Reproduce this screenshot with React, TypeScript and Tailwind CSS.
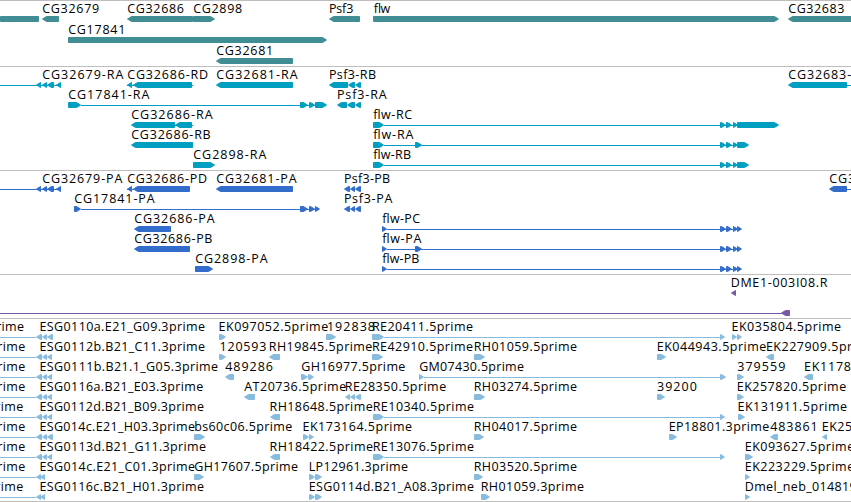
import React from "react";

type Strand = "L" | "R" | "N";
// [start, end, strand]
type Exon = [number, number, Strand];
// [start, end]
type Intron = [number, number];
// [text, start, end]
type Label = [string, number, number];

interface RowData {
  labels: Label[];
  exons: Exon[];
  introns?: Intron[];
}

interface TrackData {
  name: string;
  color: string;
  rowClass: string;
  trackClass: string;
  rows: RowData[];
}

const flwEnd: Exon[] = [
  [720, 726, "R"],
  [726, 732, "R"],
  [733, 738, "R"],
];

const tracks: TrackData[] = [
  {
    name: "gene",
    color: "text-[#408e94]",
    rowClass: "h-[21px]",
    trackClass: "h-[66px]",
    rows: [
      {
        labels: [
          ["CG32679", 42, 98.5],
          ["CG32686", 127, 183.3],
          ["CG2898", 193, 241.5],
          ["Psf3", 328.7, 352.6],
          ["flw", 373, 389],
          ["CG32683", 788, 843.7],
        ],
        exons: [
          [0, 39, "N"],
          [42, 59, "L"],
          [127, 193, "L"],
          [193, 215, "R"],
          [329, 360, "L"],
          [373, 779, "R"],
          [788, 860, "L"],
        ],
      },
      { labels: [["CG17841", 68, 124.6]], exons: [[68, 327, "R"]] },
      { labels: [["CG32681", 216, 272.5]], exons: [[216, 293, "L"]] },
    ],
  },
  {
    name: "mRNA",
    color: "text-[#009ec0]",
    rowClass: "h-5",
    trackClass: "h-[104px]",
    rows: [
      {
        labels: [
          ["CG32679-RA", 42, 122.7],
          ["CG32686-RD", 127, 207.5],
          ["CG32681-RA", 216, 297],
          ["Psf3-RB", 328.7, 375.3],
          ["CG32683-", 788, 850.5],
        ],
        exons: [
          [36, 41, "L"],
          [42, 47, "L"],
          [47, 54, "L"],
          [56, 61, "L"],
          [127, 132, "L"],
          [133, 192, "L"],
          [216, 293, "L"],
          [329, 348, "L"],
          [348, 355, "L"],
          [355, 361, "L"],
          [788, 847, "L"],
        ],
        introns: [
          [0, 61],
          [127, 193],
          [847, 851],
        ],
      },
      {
        labels: [
          ["CG17841-RA", 68, 148.7],
          ["Psf3-RA", 336.7, 386],
        ],
        exons: [
          [68, 81, "R"],
          [300, 308, "R"],
          [309, 315, "R"],
          [315, 327, "R"],
          [337, 347, "L"],
          [347, 355, "L"],
          [355, 361, "L"],
        ],
        introns: [[81, 315]],
      },
      {
        labels: [
          ["CG32686-RA", 131, 212],
          ["flw-RC", 373, 411.3],
        ],
        exons: [[131, 175, "L"], [175, 192, "L"], [373, 384, "R"], ...flwEnd, [737, 779, "R"]],
        introns: [
          [175, 193],
          [384, 740],
        ],
      },
      {
        labels: [
          ["CG32686-RB", 131, 210],
          ["flw-RA", 373, 412.7],
        ],
        exons: [[131, 193, "L"], [373, 384, "R"], [415, 422, "R"], ...flwEnd, [737, 749, "R"]],
        introns: [[384, 740]],
      },
      {
        labels: [
          ["CG2898-RA", 193, 265.7],
          ["flw-RB", 373, 410.3],
        ],
        exons: [[193, 215, "R"], [373, 384, "R"], ...flwEnd, [737, 749, "R"]],
        introns: [[384, 740]],
      },
    ],
  },
  {
    name: "CDS",
    color: "text-[#326dcc]",
    rowClass: "h-5",
    trackClass: "h-[104px]",
    rows: [
      {
        labels: [
          ["CG32679-PA", 42, 121.7],
          ["CG32686-PD", 127, 206.3],
          ["CG32681-PA", 216, 296],
          ["Psf3-PB", 343.7, 389.5],
          ["CG32683-PA", 829, 908.7],
        ],
        exons: [
          [36, 41, "L"],
          [42, 47, "L"],
          [47, 54, "L"],
          [56, 61, "L"],
          [127, 132, "L"],
          [133, 190, "L"],
          [216, 293, "L"],
          [344, 350, "L"],
          [350, 355, "L"],
          [355, 361, "L"],
          [829, 847, "L"],
        ],
        introns: [
          [0, 61],
          [127, 140],
          [847, 851],
        ],
      },
      {
        labels: [
          ["CG17841-PA", 74, 154],
          ["Psf3-PA", 343.7, 391.7],
        ],
        exons: [
          [74, 81, "R"],
          [300, 308, "R"],
          [309, 315, "R"],
          [315, 320, "R"],
          [344, 350, "L"],
          [350, 355, "L"],
          [355, 361, "L"],
        ],
        introns: [[81, 315]],
      },
      {
        labels: [
          ["CG32686-PA", 134, 214],
          ["flw-PC", 382, 419.3],
        ],
        exons: [[134, 171, "L"], [382, 387, "R"], ...flwEnd, [737, 742, "R"]],
        introns: [[387, 740]],
      },
      {
        labels: [
          ["CG32686-PB", 134, 211.7],
          ["flw-PA", 382, 420.7],
        ],
        exons: [[134, 190, "L"], [382, 387, "R"], [415, 422, "R"], ...flwEnd, [737, 742, "R"]],
        introns: [[387, 740]],
      },
      {
        labels: [
          ["CG2898-PA", 195, 267],
          ["flw-PB", 382, 418.7],
        ],
        exons: [[195, 213, "R"], [382, 387, "R"], ...flwEnd, [737, 742, "R"]],
        introns: [[387, 740]],
      },
    ],
  },
  {
    name: "BAC",
    color: "text-[#7a58a8]",
    rowClass: "h-5",
    trackClass: "h-11",
    rows: [
      { labels: [["DME1-003I08.R", 730.5, 826.7]], exons: [[731, 736, "L"]] },
      { labels: [], exons: [[781, 790, "L"]], introns: [[0, 785]] },
    ],
  },
  {
    name: "EST",
    color: "text-[#88bcde]",
    rowClass: "h-5",
    trackClass: "h-[183px]",
    rows: [
      {
        labels: [
          ["prime", -12, 23.3],
          ["ESG0110a.E21_G09.3prime", 39.3, 204.3],
          ["EK097052.5prime", 218.3, 327.5],
          ["192838", 326.7, 374.3],
          ["RE20411.5prime", 371.7, 472.3],
          ["EK035804.5prime", 731.3, 840.3],
        ],
        exons: [
          [36, 42, "L"],
          [42, 47, "L"],
          [47, 53, "L"],
          [219, 226, "R"],
          [326, 336, "R"],
          [372, 384, "R"],
          [720, 725, "R"],
          [732, 737, "R"],
          [737, 742, "R"],
        ],
        introns: [
          [0, 36],
          [384, 720],
        ],
      },
      {
        labels: [
          ["prime", -11, 24.7],
          ["ESG0112b.B21_C11.3prime", 39.3, 204.3],
          ["120593", 219.3, 265.7],
          ["RH19845.5prime", 268.5, 371.7],
          ["RE42910.5prime", 371.7, 472.3],
          ["RH01059.5prime", 473.5, 576.3],
          ["EK044943.5prime", 656.5, 765.7],
          ["EK227909.5prime", 765.7, 874.7],
        ],
        exons: [
          [36, 42, "L"],
          [42, 47, "L"],
          [47, 52, "L"],
          [219, 226, "R"],
          [269, 280, "L"],
          [372, 383, "R"],
          [474, 485, "R"],
          [657, 666, "R"],
          [766, 774, "L"],
        ],
        introns: [[0, 36]],
      },
      {
        labels: [
          ["prime", -11, 24.7],
          ["ESG0111b.B21.1_G05.3prime", 39.3, 217.3],
          ["489286", 225, 272.3],
          ["GH16977.5prime", 301, 404.7],
          ["GM07430.5prime", 419, 523.3],
          ["379559", 737, 784.7],
          ["EK1178", 803.7, 850.3],
        ],
        exons: [
          [36, 42, "L"],
          [42, 47, "L"],
          [47, 52, "L"],
          [225, 234, "L"],
          [301, 308, "R"],
          [308, 314, "R"],
          [419, 424, "R"],
          [720, 726, "R"],
          [737, 744, "R"],
          [804, 813, "L"],
        ],
        introns: [
          [0, 36],
          [424, 720],
        ],
      },
      {
        labels: [
          ["prime", -11, 24.7],
          ["ESG0116a.B21_E03.3prime", 39.3, 202.5],
          ["AT20736.5prime", 244, 345.5],
          ["RE28350.5prime", 344.5, 445.5],
          ["RH03274.5prime", 473.5, 576.3],
          ["39200", 656.7, 696.3],
          ["EK257820.5prime", 736.5, 845.5],
        ],
        exons: [
          [36, 42, "L"],
          [42, 47, "L"],
          [47, 52, "L"],
          [244, 255, "L"],
          [345, 350, "L"],
          [350, 355, "L"],
          [355, 361, "L"],
          [474, 485, "R"],
          [657, 665, "R"],
          [737, 744, "R"],
        ],
        introns: [[0, 36]],
      },
      {
        labels: [
          ["prime", -13, 22.7],
          ["ESG0112d.B21_B09.3prime", 39.3, 203.3],
          ["RH18648.5prime", 269.3, 372],
          ["RE10340.5prime", 372.5, 473.3],
          ["EK131911.5prime", 737.3, 846.3],
        ],
        exons: [
          [36, 42, "L"],
          [42, 47, "L"],
          [47, 52, "L"],
          [270, 280, "L"],
          [373, 384, "R"],
          [720, 725, "R"],
          [738, 745, "R"],
        ],
        introns: [
          [0, 36],
          [384, 720],
        ],
      },
      {
        labels: [
          ["prime", -11, 24.7],
          ["ESG014c.E21_H03.3prime", 39.3, 194.3],
          ["bs60c06.5prime", 194, 291.5],
          ["EK173164.5prime", 302.3, 411.3],
          ["RH04017.5prime", 473.5, 576.3],
          ["EP18801.3prime", 668.5, 768.7],
          ["483861", 770, 817],
          ["EK257861.5prime", 821.5, 930.5],
        ],
        exons: [
          [36, 42, "L"],
          [42, 47, "L"],
          [47, 53, "L"],
          [194, 205, "R"],
          [303, 309, "R"],
          [309, 314, "R"],
          [474, 484, "R"],
          [669, 677, "R"],
          [770, 778, "L"],
          [822, 827, "L"],
        ],
        introns: [[0, 36]],
      },
      {
        labels: [
          ["prime", -11, 24.7],
          ["ESG0113d.B21_G11.3prime", 39.3, 205.3],
          ["RH18422.5prime", 269.3, 372.3],
          ["RE13076.5prime", 372.5, 473.3],
          ["EK093627.5prime", 744.5, 853.5],
        ],
        exons: [
          [36, 42, "L"],
          [42, 47, "L"],
          [47, 52, "L"],
          [270, 280, "L"],
          [373, 384, "R"],
          [720, 725, "R"],
          [745, 753, "R"],
        ],
        introns: [
          [0, 36],
          [384, 720],
        ],
      },
      {
        labels: [
          ["prime", -11, 24.7],
          ["ESG014c.E21_C01.3prime", 39.3, 194.3],
          ["GH17607.5prime", 194, 297.3],
          ["LP12961.3prime", 308.5, 407.3],
          ["RH03520.5prime", 473.5, 576.3],
          ["EK223229.5prime", 744.5, 853.5],
        ],
        exons: [
          [36, 41, "L"],
          [40, 45, "L"],
          [194, 204, "R"],
          [309, 315, "R"],
          [315, 322, "R"],
          [474, 483, "R"],
          [745, 750, "R"],
        ],
        introns: [[0, 36]],
      },
      {
        labels: [
          ["prime", -13, 22.7],
          ["ESG0116c.B21_H01.3prime", 39.3, 203.3],
          ["ESG0114d.B21_A08.3prime", 308.5, 473.3],
          ["RH01059.3prime", 480.5, 583.3],
          ["Dmel_neb_014819", 744.5, 856],
        ],
        exons: [
          [36, 41, "L"],
          [40, 45, "L"],
          [309, 315, "R"],
          [315, 322, "R"],
          [481, 490, "R"],
          [745, 750, "R"],
        ],
        introns: [[0, 36]],
      },
    ],
  },
];

const BAR_TOP = 15.5;
const BAR_BOTTOM = 20.5;
const BAR_MID = 18;
const TIP = 4;

// the 1px outline is part of the bar, so points sit on pixel centres
const exonPoints = ([from, to, strand]: Exon) => {
  const start = from + 0.5;
  const end = to - 0.5;
  if (strand === "L") {
    return `${start},${BAR_MID} ${start + TIP},${BAR_TOP} ${end},${BAR_TOP} ${end},${BAR_BOTTOM} ${start + TIP},${BAR_BOTTOM}`;
  }
  if (strand === "R") {
    return `${start},${BAR_TOP} ${end - TIP},${BAR_TOP} ${end},${BAR_MID} ${end - TIP},${BAR_BOTTOM} ${start},${BAR_BOTTOM}`;
  }
  return `${start},${BAR_TOP} ${end},${BAR_TOP} ${end},${BAR_BOTTOM} ${start},${BAR_BOTTOM}`;
};

const FeatureRow: React.FC<{ row: RowData; rowClass: string }> = ({ row, rowClass }) => (
  <svg className={`block w-[851px] shrink-0 overflow-visible ${rowClass}`}>
    {row.introns?.map(([start, end]) => (
      <rect key={start} x={start} y={18} width={end - start} height={1} fill="currentColor" />
    ))}
    {row.exons.map((exon) => (
      <polygon
        key={exon[0]}
        points={exonPoints(exon)}
        fill="currentColor"
        stroke="currentColor"
        strokeWidth={1}
      />
    ))}
    {row.labels.map(([text, start, end]) => (
      <text
        key={start}
        x={start + 0.2}
        y={12}
        textLength={end - start + 0.5}
        className="fill-black font-['Open_Sans','DejaVu_Sans',sans-serif] text-[12.5px]"
      >
        {text}
      </text>
    ))}
  </svg>
);

export default function App() {
  return (
    <main className="flex h-[502px] w-[851px] flex-col overflow-hidden border-b border-[#bebebe] bg-white">
      {tracks.map((track) => (
        <section
          key={track.name}
          className={`flex shrink-0 flex-col border-t border-[#bebebe] ${track.trackClass}`}
        >
          <div className={track.color}>
            {track.rows.map((row, i) => (
              <FeatureRow key={i} row={row} rowClass={track.rowClass} />
            ))}
          </div>
        </section>
      ))}
    </main>
  );
}
